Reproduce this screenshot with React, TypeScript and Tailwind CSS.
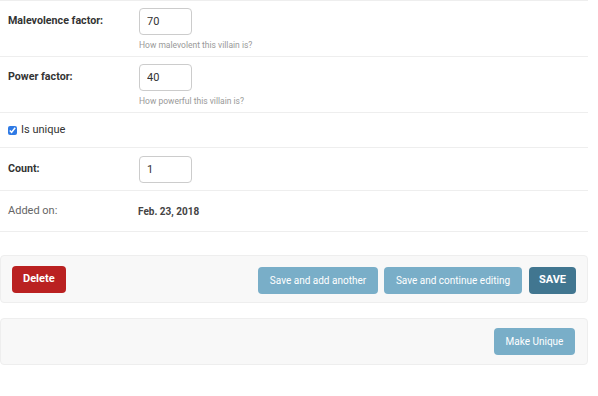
import React from "react"

const font = { fontFamily: "Roboto, 'Liberation Sans', sans-serif" }

function NumberField({ value }: { value: string }) {
  return (
    <input
      type="text"
      defaultValue={value}
      className="w-[53px] h-[27px] border border-[#cccccc] rounded-[4px] px-[7px] text-[11px] text-[#333] outline-none"
    />
  )
}

export default function App() {
  const rows = [
    { label: "Malevolence factor:", value: "70", help: "How malevolent this villain is?" },
    { label: "Power factor:", value: "40", help: "How powerful this villain is?" },
  ]

  return (
    <div className="w-[598px] h-[396px] bg-white text-[#333]" style={font}>
      <div className="w-[588px] border-t border-[#eeeeee]">
        {rows.map((r) => (
          <div key={r.label} className="flex border-b border-[#eeeeee] pt-[7px] h-[56px]">
            <label className="w-[139px] pl-[8px] pt-[5px] text-[10.7px] font-bold">{r.label}</label>
            <div className="flex flex-col">
              <NumberField value={r.value} />
              <div className="text-[8.5px] text-[#999] mt-[4px]">{r.help}</div>
            </div>
          </div>
        ))}

        {/* Is unique */}
        <div className="flex items-center border-b border-[#eeeeee] h-[35px] pl-[8px] gap-[4px]">
          <input type="checkbox" defaultChecked className="w-[9px] h-[9px] accent-[#2f7ae5]" />
          <span className="text-[11px] text-[#333]">Is unique</span>
        </div>

        {/* Count */}
        <div className="flex items-center border-b border-[#eeeeee] h-[43px]">
          <label className="w-[139px] pl-[8px] text-[10.7px] font-bold">Count:</label>
          <NumberField value="1" />
        </div>

        {/* Added on */}
        <div className="flex items-center border-b border-[#eeeeee] h-[41px]">
          <label className="w-[138px] pl-[8px] text-[11px] text-[#666]">Added on:</label>
          <span className="text-[10px] font-bold text-[#444]">Feb. 23, 2018</span>
        </div>
      </div>

      {/* Submit row */}
      <div className="mt-[23px] w-[588px] h-[48px] bg-[#f8f8f8] border border-[#eeeeee] rounded-[4px] flex items-center px-[11px]">
        <button className="h-[27px] px-[11px] rounded-[4px] bg-[#ba2121] text-white text-[11px] font-bold">
          Delete
        </button>
        <div className="ml-auto flex gap-[6px] items-center pt-[2px]">
          <button className="h-[27px] w-[120px] rounded-[4px] bg-[#79aec8] text-white text-[10px]">
            Save and add another
          </button>
          <button className="h-[27px] w-[138px] rounded-[4px] bg-[#79aec8] text-white text-[10px]">
            Save and continue editing
          </button>
          <button className="h-[27px] w-[47px] rounded-[4px] bg-[#417690] text-white text-[11px] font-bold ml-px">
            SAVE
          </button>
        </div>
      </div>

      {/* Extra action */}
      <div className="mt-[15px] w-[588px] h-[47px] bg-[#f8f8f8] border border-[#eeeeee] rounded-[4px] flex items-center justify-end pr-[12px]">
        <button className="h-[27px] w-[81px] rounded-[4px] bg-[#79aec8] text-white text-[10px]">
          Make Unique
        </button>
      </div>
    </div>
  )
}
